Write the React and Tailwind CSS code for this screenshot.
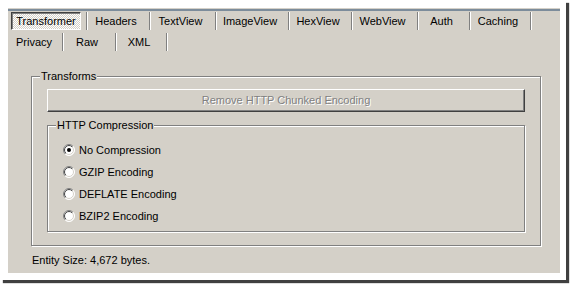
import React from 'react';

const rowOne = [
  { label: 'Transformer', w: 70, selected: true },
  { label: 'Headers', w: 56 },
  { label: 'TextView', w: 59 },
  { label: 'ImageView', w: 66 },
  { label: 'HexView', w: 56 },
  { label: 'WebView', w: 59 },
  { label: 'Auth', w: 45 },
  { label: 'Caching', w: 54 },
];

const rowTwo = [
  { label: 'Privacy', w: 46 },
  { label: 'Raw', w: 46 },
  { label: 'XML', w: 44 },
];

const options = ['No Compression', 'GZIP Encoding', 'DEFLATE Encoding', 'BZIP2 Encoding'];

const Radio = ({ checked }) => (
  <svg width="12" height="12" viewBox="0 0 12 12" className="shrink-0">
    <defs>
      <linearGradient id="radioOuter" x1="0" y1="0" x2="1" y2="1">
        <stop offset="0.5" stopColor="#808080" />
        <stop offset="0.5" stopColor="#ffffff" />
      </linearGradient>
      <linearGradient id="radioInner" x1="0" y1="0" x2="1" y2="1">
        <stop offset="0.5" stopColor="#404040" />
        <stop offset="0.5" stopColor="#d4d0c8" />
      </linearGradient>
    </defs>
    <circle cx="6" cy="6" r="5.5" fill="#fff" stroke="url(#radioOuter)" strokeWidth="1" />
    <circle cx="6" cy="6" r="4.5" fill="#fff" stroke="url(#radioInner)" strokeWidth="1" />
    {checked && <circle cx="6" cy="6" r="2" fill="#000" />}
  </svg>
);

const Tab = ({ label, w, selected }) => (
  <div className="flex items-center">
    <div
      style={{ width: w }}
      className={
        selected
          ? 'h-[18px] flex items-center justify-center border border-t-[#404040] border-l-[#404040] border-b-white border-r-white shadow-[inset_1px_1px_0_#808080] bg-[repeating-conic-gradient(#ffffff_0_25%,#d4d0c8_0_50%)] bg-[length:2px_2px]'
          : 'h-[18px] flex items-center justify-center'
      }
    >
      {label}
    </div>
    <div className="ml-[5px] w-[2px] h-[18px] border-l border-l-[#808080] border-r border-r-white" />
  </div>
);

export default function App() {
  return (
    <div className="w-[572px] h-[285px] bg-white font-['Liberation_Sans',Arial,sans-serif] text-[11px] text-black leading-[13px]">
      <div className="w-[566px] h-[280px] bg-white pt-[8px] pl-[8px] pr-[6px] pb-[7px] shadow-[3px_3px_1px_rgba(0,0,0,0.75)]">
        <div className="w-[552px] h-[265px] bg-[#d4d0c8] pt-[1px] flex flex-col">
          {/* tab strip */}
          <div className="h-[2px] bg-[#7c8c9b]" />
          <div className="flex pl-[3px] mt-[1px]">
            {rowOne.map((t) => (
              <Tab key={t.label} {...t} />
            ))}
          </div>
          <div className="flex pl-[3px] mt-[3px]">
            {rowTwo.map((t) => (
              <Tab key={t.label} {...t} />
            ))}
          </div>

          {/* Transforms group */}
          <div className="relative ml-[23px] mt-[25px] w-[510px] h-[170px] border border-[#808080] shadow-[1px_1px_0_#fff,inset_1px_1px_0_#fff] pt-[12px] px-[15px]">
            <span className="absolute left-[8px] top-[-7px] px-[1px] bg-[#d4d0c8]">Transforms</span>

            <div className="h-[23px] flex items-center justify-center border border-t-white border-l-white border-b-[#404040] border-r-[#404040] shadow-[inset_-1px_-1px_0_#808080] text-[#808080] [text-shadow:1px_1px_0_#fff]">
              Remove HTTP Chunked Encoding
            </div>

            <div className="relative mt-[13px] h-[107px] border border-[#808080] shadow-[1px_1px_0_#fff,inset_1px_1px_0_#fff] pt-[13px] pl-[15px]">
              <span className="absolute left-[8px] top-[-7px] px-[1px] bg-[#d4d0c8]">HTTP Compression</span>
              {options.map((o, i) => (
                <div key={o} className="h-[22px] flex items-center gap-[4px]">
                  <Radio checked={i === 0} />
                  <span>{o}</span>
                </div>
              ))}
            </div>
          </div>

          <div className="mt-[8px] pl-[24px]">Entity Size: 4,672 bytes.</div>
        </div>
      </div>
    </div>
  );
}
